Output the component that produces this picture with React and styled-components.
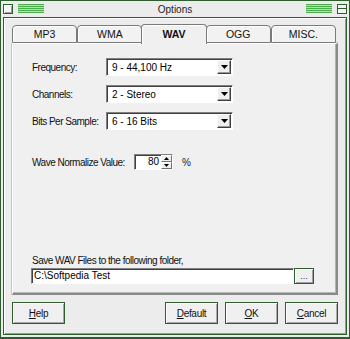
import React from 'react';
import styled, { createGlobalStyle } from 'styled-components';

const GREEN = '#2e5e2e';

const Global = createGlobalStyle`
  html, body { margin: 0; padding: 0; background: #ececec; }
  body { font-family: "Liberation Sans", Arial, sans-serif; font-size: 10px; color: #000; }
`;

const tabs = ['MP3', 'WMA', 'WAV', 'OGG', 'MISC.'];

const selects = [
  { label: 'Frequency:', value: '9 - 44,100 Hz' },
  { label: 'Channels:', value: '2 - Stereo' },
  { label: 'Bits Per Sample:', value: '6 - 16 Bits' },
];

const App = () => {
  return (
    <>
      <Global />
      <Window>
        <TitleBar>
          <CloseBox />
          <Stripes />
          <Title>Options</Title>
          <Stripes />
          <MaxBox />
        </TitleBar>
        <Frame>
          <TabRow>
            {tabs.map((t) => (
              <Tab key={t} active={t === 'WAV'}>{t}</Tab>
            ))}
          </TabRow>
          <Panel>
            <Fields>
              {selects.map((s) => (
                <Field key={s.label}>
                  <Label>{s.label}</Label>
                  <Select>
                    <SelectText>{s.value}</SelectText>
                    <ArrowButton>
                      <svg width="7" height="4" viewBox="0 0 7 4"><path d="M0 0h7L3.5 4z" fill="#000" /></svg>
                    </ArrowButton>
                  </Select>
                </Field>
              ))}
            </Fields>
            <NormalizeRow>
              <Label>Wave Normalize Value:</Label>
              <Spin>
                <SpinValue>80</SpinValue>
                <SpinArrows>
                  <SpinBtn>
                    <svg width="5" height="3" viewBox="0 0 5 3"><path d="M2.5 0L5 3H0z" fill="#000" /></svg>
                  </SpinBtn>
                  <SpinBtn>
                    <svg width="5" height="3" viewBox="0 0 5 3"><path d="M0 0h5L2.5 3z" fill="#000" /></svg>
                  </SpinBtn>
                </SpinArrows>
              </Spin>
              <Percent>%</Percent>
            </NormalizeRow>
            <Spacer />
            <FolderLabel>Save WAV Files to the following folder,</FolderLabel>
            <FolderRow>
              <FolderInput>C:\Softpedia Test</FolderInput>
              <BrowseButton>...</BrowseButton>
            </FolderRow>
          </Panel>
          <ButtonRow>
            <Button><u>H</u>elp</Button>
            <Gap />
            <Button><u>D</u>efault</Button>
            <Button><u>O</u>K</Button>
            <Button><u>C</u>ancel</Button>
          </ButtonRow>
        </Frame>
      </Window>
    </>
  );
};

const Window = styled.div`
  width: 350px;
  height: 339px;
  box-sizing: border-box;
  border: 1px solid ${GREEN};
  border-bottom-width: 2px;
  background: #ececec;
  display: flex;
  flex-direction: column;
`;

const TitleBar = styled.div`
  height: 15px;
  display: flex;
  align-items: center;
  padding: 0 2px;
  gap: 5px;
  background: #ececec;
`;

const CloseBox = styled.div`
  width: 8px;
  height: 8px;
  border: 1px solid ${GREEN};
  background: #f4f4f4;
  box-shadow: inset 1px 1px 0 #fff, inset -1px -1px 0 #a0a0a0;
`;

const MaxBox = styled.div`
  width: 8px;
  height: 8px;
  border: 1px solid ${GREEN};
  background: linear-gradient(${GREEN}, ${GREEN}) center / 100% 1px no-repeat, #f4f4f4;
`;

const Stripes = styled.div`
  width: 26px;
  height: 9px;
  background: repeating-linear-gradient(
    to bottom,
    #4fae4f 0px,
    #4fae4f 1px,
    #a6e6a6 1px,
    #a6e6a6 2px
  );
`;

const Title = styled.div`
  flex: 1;
  text-align: center;
  font-size: 10px;
  color: #222;
  padding-top: 1px;
`;

const Frame = styled.div`
  flex: 1;
  margin: 1px 2px 2px 2px;
  border: 1px solid ${GREEN};
  box-shadow: inset 1px 1px 0 #fff, inset -1px -1px 0 #9a9a9a;
  background: #ececec;
  padding: 6px 8px 6px 8px;
  display: flex;
  flex-direction: column;
`;

const TabRow = styled.div`
  display: flex;
  align-items: flex-end;
  height: 19px;
  padding-right: 2px;
  position: relative;
  z-index: 1;
`;

const Tab = styled.div`
  flex: 1;
  height: ${(p) => (p.active ? '20px' : '18px')};
  margin-bottom: ${(p) => (p.active ? '-1px' : '0')};
  margin-left: ${(p) => (p.active ? '-1px' : '0')};
  margin-right: ${(p) => (p.active ? '-1px' : '0')};
  box-sizing: border-box;
  border: 1px solid #7a7a7a;
  border-bottom: ${(p) => (p.active ? 'none' : '1px solid #7a7a7a')};
  border-radius: 4px 4px 0 0;
  background: ${(p) => (p.active ? '#f0f0f0' : '#f2f2f2')};
  box-shadow: inset 1px 1px 0 #fff;
  display: flex;
  align-items: center;
  justify-content: center;
  font-size: 10.5px;
  font-weight: ${(p) => (p.active ? 'bold' : 'normal')};
  color: #111;
  padding-bottom: ${(p) => (p.active ? '1px' : '0')};
`;

const Panel = styled.div`
  height: 252px;
  box-sizing: border-box;
  border: 1px solid #fff;
  border-right: 2px solid #8a8a8a;
  border-bottom: 2px solid #8a8a8a;
  box-shadow: -1px 0 0 #c8c8c8, 0 -1px 0 #c8c8c8, inset -1px -1px 0 #b4b4b4;
  background: #f0f0f0;
  padding: 14px 0 9px 19px;
  display: flex;
  flex-direction: column;
`;

const Fields = styled.div`
  display: flex;
  flex-direction: column;
  gap: 9px;
`;

const Field = styled.div`
  display: flex;
  align-items: center;
`;

const Label = styled.span`
  width: 74px;
  font-size: 10px;
  letter-spacing: -0.5px;
  color: #111;
  white-space: nowrap;
`;

const Select = styled.div`
  width: 127px;
  height: 18px;
  box-sizing: border-box;
  border: 1px solid;
  border-color: #808080 #fff #fff #808080;
  box-shadow: inset 1px 1px 0 #404040;
  background: #fff;
  display: flex;
  align-items: center;
  padding: 0 1px 0 5px;
`;

const SelectText = styled.span`
  flex: 1;
  font-size: 10px;
  padding-top: 1px;
`;

const ArrowButton = styled.div`
  width: 14px;
  height: 14px;
  box-sizing: border-box;
  background: #efefef;
  border: 1px solid;
  border-color: #fff #404040 #404040 #fff;
  box-shadow: inset -1px -1px 0 #999;
  display: flex;
  align-items: center;
  justify-content: center;
`;

const NormalizeRow = styled.div`
  display: flex;
  align-items: center;
  margin-top: 24px;
`;

const Spin = styled.div`
  margin-left: 28px;
  width: 39px;
  height: 16px;
  box-sizing: border-box;
  border: 1px solid;
  border-color: #808080 #fff #fff #808080;
  box-shadow: inset 1px 1px 0 #404040;
  background: #fff;
  display: flex;
`;

const SpinValue = styled.span`
  flex: 1;
  text-align: right;
  padding-right: 2px;
  font-size: 10px;
  line-height: 14px;
`;

const SpinArrows = styled.div`
  width: 11px;
  display: flex;
  flex-direction: column;
`;

const SpinBtn = styled.div`
  flex: 1;
  background: #efefef;
  box-sizing: border-box;
  border: 1px solid;
  border-color: #fff #707070 #707070 #fff;
  display: flex;
  align-items: center;
  justify-content: center;
`;

const Percent = styled.span`
  margin-left: 9px;
  font-size: 10px;
  color: #222;
`;

const Spacer = styled.div`
  flex: 1;
`;

const FolderLabel = styled.div`
  font-size: 10px;
  letter-spacing: -0.5px;
  color: #111;
  margin-bottom: 2px;
`;

const FolderRow = styled.div`
  display: flex;
  height: 16px;
  margin-left: -1px;
`;

const FolderInput = styled.div`
  width: 263px;
  box-sizing: border-box;
  background: #fff;
  border: 1px solid;
  border-color: #808080 #fff #fff #808080;
  box-shadow: inset 1px 1px 0 #404040;
  font-size: 10px;
  line-height: 14px;
  padding-left: 2px;
`;

const BrowseButton = styled.div`
  width: 20px;
  box-sizing: border-box;
  border: 1px solid ${GREEN};
  background: #f0f0f0;
  box-shadow: inset 1px 1px 0 #fff, inset -1px -1px 0 #a0a0a0;
  display: flex;
  align-items: center;
  justify-content: center;
  font-size: 9px;
  line-height: 8px;
  color: #333;
`;

const ButtonRow = styled.div`
  display: flex;
  gap: 7px;
  margin-top: 7px;
`;

const Gap = styled.div`
  flex: 1;
`;

const Button = styled.div`
  width: 53px;
  height: 22px;
  box-sizing: border-box;
  border: 1px solid ${GREEN};
  background: #f0f0f0;
  box-shadow: inset 1px 1px 0 #fff, inset -1px -1px 0 #a8a8a8;
  display: flex;
  align-items: center;
  justify-content: center;
  font-size: 10px;
  letter-spacing: -0.3px;
  color: #111;

  & u {
    text-decoration-thickness: 1px;
    text-underline-offset: 1px;
  }
`;

export default App;
